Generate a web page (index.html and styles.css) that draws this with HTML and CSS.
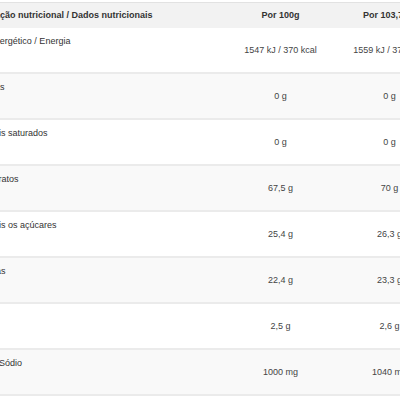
FILE: index.html
```html
<!DOCTYPE html>
<html lang="pt">
<head>
<meta charset="utf-8">
<link rel="stylesheet" href="styles.css">
</head>
<body>
<div class="viewport">
  <div class="table">
    <div class="row head">
      <div class="cell label">Informação nutricional / Dados nutricionais</div>
      <div class="cell val">Por 100g</div>
      <div class="cell val">Por 103,75 g</div>
    </div>
    <div class="row">
      <div class="cell label">Valor energético / Energia</div>
      <div class="cell val">1547 kJ / 370 kcal</div>
      <div class="cell val">1559 kJ / 370 kcal</div>
    </div>
    <div class="row alt">
      <div class="cell label">Gorduras</div>
      <div class="cell val">0 g</div>
      <div class="cell val">0 g</div>
    </div>
    <div class="row">
      <div class="cell label">dos quais saturados</div>
      <div class="cell val">0 g</div>
      <div class="cell val">0 g</div>
    </div>
    <div class="row alt">
      <div class="cell label">Carboidratos</div>
      <div class="cell val">67,5 g</div>
      <div class="cell val">70 g</div>
    </div>
    <div class="row">
      <div class="cell label">dos quais os açúcares</div>
      <div class="cell val">25,4 g</div>
      <div class="cell val">26,3 g</div>
    </div>
    <div class="row alt">
      <div class="cell label">Proteínas</div>
      <div class="cell val">22,4 g</div>
      <div class="cell val">23,3 g</div>
    </div>
    <div class="row">
      <div class="cell label">Sal</div>
      <div class="cell val">2,5 g</div>
      <div class="cell val">2,6 g</div>
    </div>
    <div class="row alt">
      <div class="cell label">do qual Sódio</div>
      <div class="cell val">1000 mg</div>
      <div class="cell val">1040 mg</div>
    </div>
  </div>
</div>
</body>
</html>
```
FILE: styles.css
```css
html, body {
  margin: 0;
  padding: 0;
  background: #ffffff;
}
body {
  font-family: "Liberation Sans", Arial, sans-serif;
  font-size: 9px;
  color: #333333;
}
.viewport {
  width: 400px;
  height: 400px;
  overflow: hidden;
  padding-top: 2px;
  box-sizing: border-box;
}
.table {
  margin-left: -41px;
  width: 485px;
  border-top: 1px solid #e2e2e2;
}
.row {
  display: grid;
  grid-template-columns: 267px 109px 109px;
  height: 46px;
  box-sizing: border-box;
  border-bottom: 2px solid #ebebeb;
  background: #ffffff;
}
.row.alt {
  background: #f9f9f9;
}
.row.head {
  height: 25px;
  border-bottom: none;
  background: #f2f2f2;
  font-weight: bold;
  color: #333333;
}
.cell {
  line-height: 11px;
  white-space: nowrap;
  overflow: hidden;
}
.label {
  padding: 8px 0 0 8px;
}
.val {
  display: flex;
  align-items: center;
  justify-content: center;
  color: #444444;
}
.head .label {
  padding-top: 0;
  display: flex;
  align-items: center;
}
.head .val {
  color: #333333;
}
```
